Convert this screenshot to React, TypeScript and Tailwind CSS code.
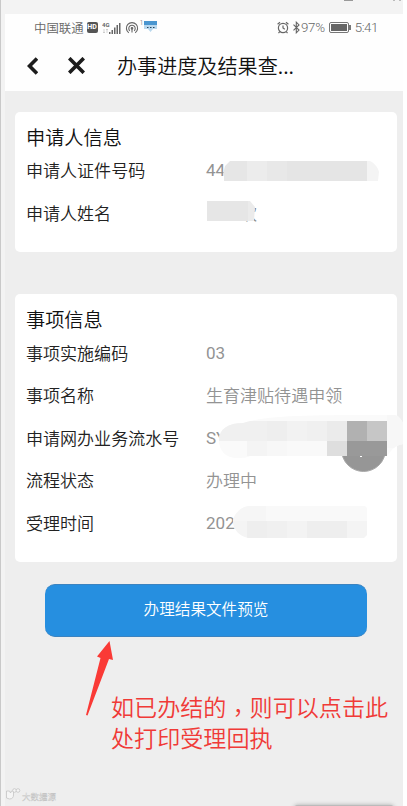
import type { ReactNode } from 'react';
import clsx from 'clsx';

type RowProps = {
    label: string;
    value: string;
    latin?: boolean;
    children?: ReactNode;
};

type Tile = [x: number, y: number, width: number, height: number, fill: string];

type MosaicProps = {
    id: string;
    className: string;
    width: number;
    height: number;
    outline: string;
    tiles: Tile[];
};

const idTiles: Tile[] = [
    [0, 0, 24, 20, '#e6e6e6'],
    [24, 0, 20, 20, '#ececec'],
    [44, 0, 20, 20, '#e8e8e8'],
    [64, 0, 80, 20, '#e5e5e5'],
    [144, 0, 12, 20, '#f4f4f4'],
];

const nameTiles: Tile[] = [
    [0, 0, 41, 20, '#e6e6e6'],
    [41, 0, 7, 20, '#ebebeb'],
];

const serialTiles: Tile[] = [
    [0, 0, 184, 48, '#fafafa'],
    [0, 6, 28, 20, '#f0f0f0'],
    [28, 6, 20, 20, '#f0f0f0'],
    [48, 6, 20, 20, '#eeeeee'],
    [68, 6, 20, 20, '#f2f2f2'],
    [88, 6, 20, 20, '#f0f0f0'],
    [108, 6, 20, 20, '#ebebeb'],
    [128, 6, 20, 20, '#b1b1b1'],
    [148, 6, 20, 20, '#c6c6c6'],
    [28, 26, 20, 15, '#f4f4f4'],
    [48, 26, 20, 15, '#f7f7f7'],
    [68, 26, 40, 15, '#f9f9f9'],
    [108, 26, 20, 15, '#dedede'],
    [128, 26, 40, 15, '#999999'],
    [168, 0, 16, 33, '#f7f7f7'],
];

const timeTiles: Tile[] = [
    [0, 0, 134, 15, '#f9f9f9'],
    [0, 0, 33, 15, '#f6f6f6'],
    [0, 15, 14, 17, '#f4f4f4'],
    [14, 15, 20, 17, '#eeeeee'],
    [34, 15, 20, 17, '#f0f0f0'],
    [54, 15, 20, 17, '#f3f3f3'],
    [74, 15, 40, 17, '#eeeeee'],
    [114, 15, 20, 17, '#f4f4f4'],
];

function Mosaic({ id, className, width, height, outline, tiles }: MosaicProps) {
    return (
        <svg
            className={`absolute ${className}`}
            width={width}
            height={height}
            viewBox={`0 0 ${width} ${height}`}
            shapeRendering="crispEdges"
        >
            <clipPath id={id}>
                <path d={outline} />
            </clipPath>
            <g clipPath={`url(#${id})`}>
                {tiles.map(([x, y, w, h, fill]) => (
                    <rect key={`${x}-${y}-${w}`} x={x} y={y} width={w} height={h} fill={fill} />
                ))}
            </g>
        </svg>
    );
}

function Row({ label, value, latin, children }: RowProps) {
    return (
        <div className="relative flex h-[42.6px] items-center text-[17.05px] leading-6">
            <span className="w-[180px] text-[#222]">{label}</span>
            <span className={clsx('text-[#939393]', latin && "font-['Roboto'] font-normal")}>
                {value}
            </span>
            {children}
        </div>
    );
}

function StatusBar() {
    return (
        <div className="flex h-[27px] items-center pl-[29px] pr-[25px] text-[#666]">
            <span className="text-[12.4px] leading-4">中国联通</span>
            <span className="ml-[3px] flex h-[11px] w-[11px] items-center justify-center rounded-[2px] bg-[#555] font-['Roboto'] text-[7px] font-bold text-white">
                HD
            </span>
            <svg className="ml-1" width="19" height="14" viewBox="0 0 19 14" fill="#666">
                <text x="0" y="6" fontSize="6" fontWeight="700" fontFamily="Roboto, sans-serif">
                    4G
                </text>
                <path d="M2 8v4M1 11l1 1 1-1M5 12V8M4 9l1-1 1 1" stroke="#bbb" strokeWidth=".6" fill="none" />
                <path d="M7 11h1.500v2H7zM9.500 9H11v4H9.500zM12 6.500h1.500V13H12zM14.500 4H16v9h-1.500zM17 2h1.500v11H17z" />
            </svg>
            <svg className="ml-1" width="14" height="14" viewBox="0 0 14 14" fill="none" stroke="#666" strokeWidth="1.100">
                <path d="M3.800 11.800a5.600 5.600 0 1 1 6.400 0" />
                <path d="M4.800 9.800a3.200 3.200 0 1 1 4.400 0" />
                <circle cx="7" cy="7.300" r=".8" fill="#666" />
                <path d="M7 8v3.500" />
            </svg>
            <span className="mb-2 ml-px font-['Roboto'] text-[7px] leading-none">1</span>
            <svg className="mb-px ml-px" width="13" height="12" viewBox="0 0 13 12">
                <path d="M0 0h13v8H9l-2.500 3L4 8H0z" fill="#b9d8ee" />
                <path d="M0 0h13v4H0z" fill="#4a96d0" />
                <path d="M3 6.500h1.500M6 6.500h1.500M9 6.500h1.500" stroke="#26475f" />
            </svg>
            <div className="ml-auto flex items-center font-['Roboto'] text-[13.3px] leading-4">
                <svg width="12" height="13" viewBox="0 0 12 13" fill="none" stroke="#666" strokeWidth="1.200">
                    <circle cx="6" cy="7" r="4.600" />
                    <path d="M6 4.500V7l1.800 1.300M.6 3.200 3 1.200M11.400 3.200 9 1.200M2.700 10.700l-1.200 1.500M9.300 10.700l1.200 1.500" />
                </svg>
                <svg className="ml-[3px]" width="9" height="13" viewBox="0 0 9 13" fill="none" stroke="#666" strokeWidth="1.100">
                    <path d="M1.500 3.700 7 9.100l-2.700 2.700V1.200L7 3.900 1.500 9.300" />
                </svg>
                <span className="tracking-[-0.3px]">97%</span>
                <span className="ml-1 flex h-[11px] w-5 rounded-[2px] border border-[#777] p-px">
                    <span className="flex-1 bg-[#666]" />
                </span>
                <span className="h-[5px] w-[2px] bg-[#777]" />
                <span className="ml-1 tracking-[-0.4px]">5:41</span>
            </div>
        </div>
    );
}

function NavBar() {
    return (
        <div className="flex h-[50px] items-center pl-[22px]">
            <svg className="-mt-px" width="11" height="18" viewBox="0 0 11 18" fill="none" stroke="#1c1c1c" strokeWidth="3.700">
                <path d="m10 1.500-7.500 7.500 7.500 7.500" />
            </svg>
            <svg className="-mt-[2px] ml-[30px]" width="17" height="17" viewBox="0 0 17 17" fill="none" stroke="#1c1c1c" strokeWidth="3.700">
                <path d="m1.200 1.200 14.600 14.600M15.800 1.200 1.200 15.800" />
            </svg>
            <h1 className="ml-[32px] text-[20.1px] leading-7 text-[#111]">
                办事进度及结果查...
            </h1>
        </div>
    );
}

function Watermark() {
    return (
        <div className="absolute left-[6px] top-[790px] flex items-center text-[#f5f5f5]">
            <svg className="-mt-1" width="15" height="12" viewBox="0 0 15 12" fill="#f5f5f5" stroke="#c4c4c4" strokeWidth=".8">
                <path d="M.5 3h3l1 2 1-2h2v4c0 2-1 4-4 4l-3-1z" />
                <circle cx="8.500" cy="2.500" r="1.800" />
                <circle cx="12" cy="2.500" r="1.800" />
            </svg>
            <span className="ml-px text-[8.5px] leading-3 [-webkit-text-stroke:0.3px_#bdbdbd]">
                大数据源
            </span>
        </div>
    );
}

export default function App() {
    return (
        <div className="relative h-[806px] w-[407px] overflow-hidden bg-white font-['Noto_Sans_CJK_SC',sans-serif] font-[350]">
            <div className="h-full w-[403px] border-l border-[#c9c9c9] bg-[#f3f3f3] pl-1">
                <div className="flex h-[14px] justify-end">
                    <span className="mr-[40px] h-px w-[9px] bg-[#999]" />
                    <span className="mr-[2px] h-px w-2 border-x-2 border-[#bbb]" />
                </div>
                <div className="h-[792px] bg-[#eee]">
                    <header className="h-[77px] bg-[#fefefe]">
                        <StatusBar />
                        <NavBar />
                    </header>
                    <main className="px-[10px] pt-[21px]">
                        <section className="h-[140px] w-[382px] rounded-[5px] bg-white pl-[11px] pt-[13px]">
                            <h2 className="text-[19.2px] leading-6 text-[#111]">申请人信息</h2>
                            <Row label="申请人证件号码" value="44" latin>
                                <Mosaic
                                    id="id-number"
                                    className="left-[197px] top-[12px]"
                                    width={156}
                                    height={20}
                                    outline="M7 0h140c4 2 8 6 9 11l-1 9H1v-5l-1-2 2-8z"
                                    tiles={idTiles}
                                />
                            </Row>
                            <Row label="申请人姓名" value="">
                                <span className="absolute left-[214px] text-[#888]">欢</span>
                                <Mosaic
                                    id="name"
                                    className="left-[181px] top-[9.4px]"
                                    width={48}
                                    height={20}
                                    outline="M0 0h43l5 6-1 14H0z"
                                    tiles={nameTiles}
                                />
                            </Row>
                        </section>
                        <section className="mt-[42px] h-[268px] w-[382px] rounded-[5px] bg-white pl-[11px] pt-[13.4px]">
                            <h2 className="text-[19.2px] leading-6 text-[#111]">事项信息</h2>
                            <Row label="事项实施编码" value="03" latin />
                            <Row label="事项名称" value="生育津贴待遇申领" />
                            <Row label="申请网办业务流水号" value="SY" latin>
                                {/* floating button, half hidden under the mosaic */}
                                <span className="absolute left-[315px] top-[10.6px] h-[45px] w-[45px] rounded-full border border-[#aaa] bg-[#969696]" />
                                <span className="absolute left-[334px] top-[39.6px] h-px w-[2px] bg-white" />
                                <Mosaic
                                    id="serial"
                                    className="left-[193px] top-[-1.6px]"
                                    width={184}
                                    height={48}
                                    outline="M0 25C0 14 9 8 24 8 50 0 90 0 168 0h8c4 1 6 4 8 8v21c-4 1-8 2-12 7l-4 5H32c-4 1-5 2-14 2C7 43 0 36 0 25z"
                                    tiles={serialTiles}
                                />
                            </Row>
                            <Row label="流程状态" value="办理中" />
                            <Row label="受理时间" value="202" latin>
                                <Mosaic
                                    id="time"
                                    className="left-[207px] top-[4.2px]"
                                    width={134}
                                    height={32}
                                    outline="M16 0h116l2 2v27l-3 3H15C6 30 0 23 0 16S7 1 16 0z"
                                    tiles={timeTiles}
                                />
                            </Row>
                        </section>
                        <button className="ml-[30px] mt-[21.5px] flex h-[53.5px] w-[322px] items-center justify-center rounded-[10px] border-y border-[#3b83c0] bg-[#268fe0] pb-[5px] text-[15.6px] leading-6 text-white">
                            办理结果文件预览
                        </button>
                    </main>
                </div>
            </div>
            <svg className="absolute left-[85px] top-[640px]" width="30" height="78" viewBox="0 0 30 78" fill="#fa3a36">
                <path d="m24.500 1 3.500 19-4-1L2.500 75.500 1 75l14.500-57-3.500-1.500z" />
            </svg>
            <div className="absolute left-[111px] top-[691px] w-[290px] text-[23.1px] leading-[31px] text-[#f03a37]">
                <p className="flex">
                    <span>如已办结的</span>
                    <span className="h-[23px] pt-[9px] font-['Noto_Sans_CJK_TC'] leading-[23px]" lang="zh-TW">
                        ，
                    </span>
                    <span>则可以点击此</span>
                </p>
                <p>处打印受理回执</p>
            </div>
            <Watermark />
            <div className="absolute left-[294px] top-[805px] h-2 w-[100px] rounded-full bg-[#bbb] shadow-[0_0_4px_#aaa]" />
        </div>
    );
}
